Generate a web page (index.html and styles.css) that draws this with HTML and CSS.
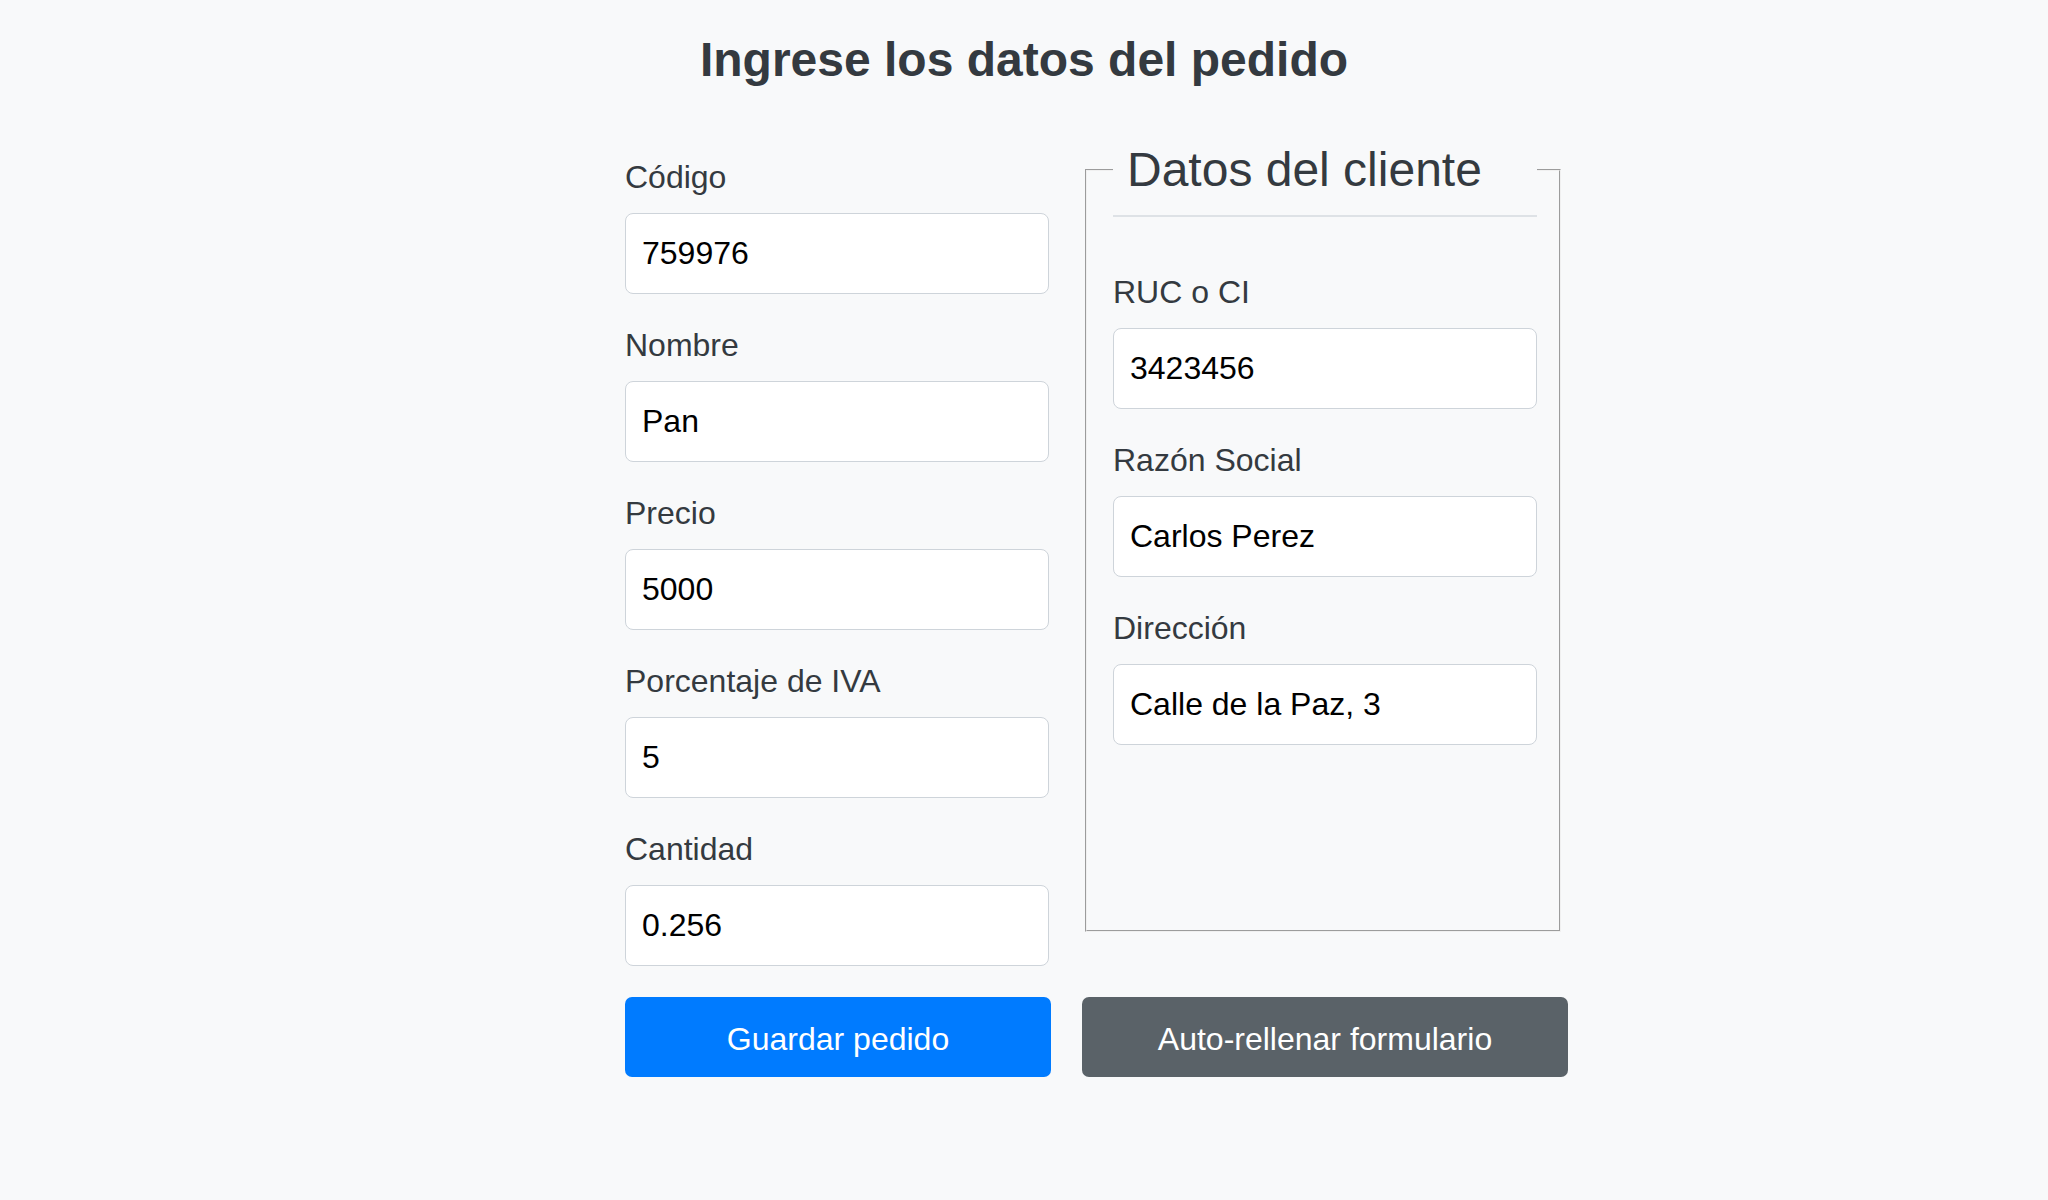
FILE: index.html
```html
<!DOCTYPE html>
<html>
<head>
<meta charset="utf-8">
<title>Pedido</title>
<link rel="stylesheet" href="styles.css">
</head>
<body>

<h1 class="title">Ingrese los datos del pedido</h1>

<form class="order-form" id="orderForm">
  <div class="columns">
    <div class="product">
      <div class="field">
        <label for="codigo">Código</label>
        <input type="text" id="codigo" value="759976">
      </div>
      <div class="field">
        <label for="nombre">Nombre</label>
        <input type="text" id="nombre" value="Pan">
      </div>
      <div class="field">
        <label for="precio">Precio</label>
        <input type="text" id="precio" value="5000">
      </div>
      <div class="field">
        <label for="iva">Porcentaje de IVA</label>
        <input type="text" id="iva" value="5">
      </div>
      <div class="field">
        <label for="cantidad">Cantidad</label>
        <input type="text" id="cantidad" value="0.256">
      </div>
    </div>

    <fieldset class="client">
      <legend>Datos del cliente</legend>
      <div class="client-rule"></div>
      <div class="field">
        <label for="ruc">RUC o CI</label>
        <input type="text" id="ruc" value="3423456">
      </div>
      <div class="field">
        <label for="razon">Razón Social</label>
        <input type="text" id="razon" value="Carlos Perez">
      </div>
      <div class="field">
        <label for="direccion">Dirección</label>
        <input type="text" id="direccion" value="Calle de la Paz, 3">
      </div>
    </fieldset>
  </div>

  <div class="actions">
    <button type="submit" class="btn btn-primary">Guardar pedido</button>
    <button type="button" class="btn btn-secondary">Auto-rellenar formulario</button>
  </div>
</form>

</body>
</html>
```

FILE: styles.css
```css
body {
  margin: 0;
  background-color: #f8f9fa;
  font-family: "Liberation Sans", Arial, sans-serif;
  color: #343a40;
}

.title {
  margin: 31px 0 0;
  font-size: 48px;
  font-weight: bold;
  line-height: 1.2;
  text-align: center;
}

.order-form {
  width: 943px;
  margin-left: calc(50% - 399px);
}

.columns {
  display: grid;
  grid-template-columns: 424px 476px;
  column-gap: 36px;
  align-items: start;
  margin-top: 45px;
}

.product {
  padding-top: 19px;
}

.field {
  margin-bottom: 27px;
}

.field:last-child {
  margin-bottom: 0;
}

.field label {
  display: block;
  font-size: 32px;
  line-height: 48px;
  margin-bottom: 12px;
}

.field input {
  display: block;
  box-sizing: border-box;
  width: 100%;
  height: 81px;
  padding: 0 16px;
  font-family: "Liberation Sans", Arial, sans-serif;
  font-size: 32px;
  color: #000;
  background-color: #fff;
  border: 1px solid #ced4da;
  border-radius: 8px;
}

.client {
  box-sizing: border-box;
  height: 798px;
  min-width: 0;
  margin: 0;
  padding: 0 22px 0 26px;
  border: 2px groove #f0f0f0;
}

.client legend {
  box-sizing: border-box;
  width: 100%;
  padding: 0 14px;
  font-size: 48px;
  line-height: 1.5;
}

.client-rule {
  margin-top: 9px;
  margin-bottom: 51px;
  border-top: 2px solid #dee2e6;
}

.actions {
  display: flex;
  gap: 31px;
  margin-top: 31px;
}

.btn {
  height: 80px;
  padding: 5px 0 0;
  font-family: "Liberation Sans", Arial, sans-serif;
  font-size: 32px;
  color: #fff;
  border: none;
  border-radius: 7px;
  cursor: pointer;
}

.btn-primary {
  width: 426px;
  background-color: #007bff;
}

.btn-secondary {
  width: 486px;
  background-color: #5a6268;
}
```
